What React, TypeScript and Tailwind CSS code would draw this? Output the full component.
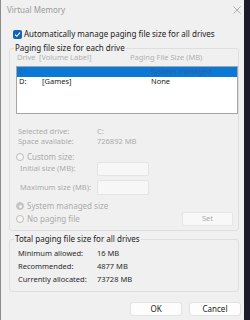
import React from "react";

const font = { fontFamily: '"Noto Sans", "Liberation Sans", sans-serif' };

const Radio = ({ checked }: { checked?: boolean }) => (
  <span
    className={
      "w-[8px] h-[8px] rounded-full border flex items-center justify-center shrink-0 " +
      (checked ? "border-[#c4c4c4] bg-[#c4c4c4]" : "border-[#bcbcbc] bg-[#f6f6f6]")
    }
  >
    {checked && <span className="w-[3px] h-[3px] rounded-full bg-[#f4f4f4]" />}
  </span>
);

const InfoRow = ({ label, value, h = "h-[10px]" }: { label: string; value: string; h?: string }) => (
  <div className={`flex items-center whitespace-nowrap ${h}`}>
    <span className="w-[87px] pl-[8px] shrink-0">{label}</span>
    <span>{value}</span>
  </div>
);

const drives = [
  { drive: "C:", label: "", size: "System managed", selected: true },
  { drive: "D:", label: "[Games]", size: "None", selected: false },
];

export default function App() {
  return (
    <div className="w-[250px] h-[320px] bg-[#1c1b29] flex overflow-hidden" style={font}>
      <div className="w-[244px] h-full bg-[#f0f0f0] flex flex-col text-[7.5px] leading-none text-[#1b1b1b] border-l border-[#8c8c8c]">
        {/* title bar */}
        <div className="h-[19px] flex items-center justify-between pl-[6px] pr-[3px] text-[#9a9a9a] text-[8px]">
          <span>Virtual Memory</span>
          <svg width="8" height="8" viewBox="0 0 8 8">
            <path d="M0.5 0.5 L7.5 7.5 M7.5 0.5 L0.5 7.5" stroke="#a6a6a6" strokeWidth="0.9" />
          </svg>
        </div>

        {/* auto manage checkbox */}
        <div className="mt-[10px] h-[10px] flex items-center pl-[12px]">
          <span className="w-[9px] h-[9px] rounded-[2px] bg-[#1262b8] flex items-center justify-center">
            <svg width="7" height="7" viewBox="0 0 7 7">
              <path d="M1 3.6 L2.8 5.3 L6 1.6" stroke="#fff" strokeWidth="1.1" fill="none" />
            </svg>
          </span>
          <span className="ml-[2px] text-[8px]">Automatically manage paging file size for all drives</span>
        </div>

        {/* group 1 */}
        <fieldset className="mt-[4px] ml-[8px] mr-[5px] border border-[#dedede] rounded-[3px] pb-[4px]">
          <legend className="ml-[4px] px-[1px] h-[10px] leading-[10px] text-[8px]">Paging file size for each drive</legend>
          <div className="h-[10px] flex items-center text-[#b0b0b0] whitespace-nowrap">
            <span className="pl-[7px] w-[29px] shrink-0">Drive</span>
            <span className="w-[91px] shrink-0">[Volume Label]</span>
            <span>Paging File Size (MB)</span>
          </div>
          <div className="mt-[3px] ml-[6px] h-[48px] bg-white border border-[#a5a5a5]">
            {drives.map((d) => (
              <div
                key={d.drive}
                className={
                  "h-[10px] flex items-center whitespace-nowrap " +
                  (d.selected ? "bg-[#0a78d4] text-[#2a5fa8]" : "text-[#1b1b1b]")
                }
              >
                <span className="pl-[2px] w-[25px] shrink-0">{d.drive}</span>
                <span className="w-[109px] shrink-0">{d.label}</span>
                <span>{d.size}</span>
              </div>
            ))}
          </div>

          <div className="text-[#ababab]">
            <div className="mt-[13px]">
              <InfoRow label="Selected drive:" value="C:" />
              <InfoRow label="Space available:" value="726892 MB" />
            </div>

            <div className="mt-[5px] h-[10px] flex items-center pl-[6px] gap-[3px]">
              <Radio />
              <span className="text-[8px]">Custom size:</span>
            </div>
            <div className="h-[14px] flex items-center whitespace-nowrap">
              <span className="w-[87px] pl-[10px] shrink-0">Initial size (MB):</span>
              <span className="w-[52px] h-[14px] bg-[#f7f7f7] border border-[#e4e4e4] rounded-[2px]" />
            </div>
            <div className="mt-[4px] h-[15px] flex items-center whitespace-nowrap">
              <span className="w-[87px] pl-[10px] shrink-0">Maximum size (MB):</span>
              <span className="w-[52px] h-[15px] bg-[#f7f7f7] border border-[#e4e4e4] rounded-[2px]" />
            </div>

            <div className="mt-[6px] h-[10px] flex items-center pl-[6px] gap-[3px]">
              <Radio checked />
              <span className="text-[8px]">System managed size</span>
            </div>
            <div className="mt-[1px] h-[14px] flex items-center pl-[6px] gap-[3px]">
              <Radio />
              <span className="text-[8px]">No paging file</span>
              <span className="ml-auto mr-[5px] w-[51px] h-[14px] bg-[#f8f8f8] border border-[#e6e6e6] rounded-[2px] flex items-center justify-center">
                Set
              </span>
            </div>
          </div>
        </fieldset>

        {/* group 2 */}
        <fieldset className="mt-[3px] ml-[8px] mr-[5px] border border-[#dedede] rounded-[3px] pb-[5px]">
          <legend className="ml-[4px] px-[1px] h-[10px] leading-[10px] text-[8px]">Total paging file size for all drives</legend>
          <div className="mt-[3px] text-[#2b2b2b]">
            <InfoRow h="h-[13px]" label="Minimum allowed:" value="16 MB" />
            <InfoRow h="h-[13px]" label="Recommended:" value="4877 MB" />
            <InfoRow h="h-[13px]" label="Currently allocated:" value="73728 MB" />
          </div>
        </fieldset>

        {/* buttons */}
        <div className="mt-[10px] flex justify-end gap-[7px] pr-[3px]">
          <button className="w-[52px] h-[14px] bg-[#fdfdfd] border border-[#e2e2e2] rounded-[3px] text-[8px]">OK</button>
          <button className="w-[52px] h-[14px] bg-[#fdfdfd] border border-[#e2e2e2] rounded-[3px] text-[8px]">Cancel</button>
        </div>
      </div>
    </div>
  );
}
